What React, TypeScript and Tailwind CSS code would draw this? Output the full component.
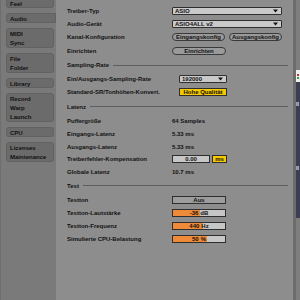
import React from "react";

const font = { fontFamily: '"Liberation Sans", Arial, sans-serif' };

const tabs: { lines: string[]; h: string; active?: boolean }[] = [
  { lines: ["Feel"], h: "h-[10px]" },
  { lines: ["Audio"], h: "h-[10px]", active: true },
  { lines: ["MIDI", "Sync"], h: "h-[20px]" },
  { lines: ["File", "Folder"], h: "h-[20px]" },
  { lines: ["Library"], h: "h-[10px]" },
  { lines: ["Record", "Warp", "Launch"], h: "h-[29px]" },
  { lines: ["CPU"], h: "h-[10px]" },
  { lines: ["Licenses", "Maintenance"], h: "h-[20px]" },
];

const Arrow = () => (
  <svg width="5" height="4" viewBox="0 0 5 4" className="shrink-0">
    <path d="M0 0.5 H5 L2.5 3.5 Z" fill="#111" />
  </svg>
);

const Dropdown = ({ text, w }: { text: string; w: string }) => (
  <div className={`${w} h-[8px] flex items-center justify-between pl-[2px] pr-[3px] bg-[#c9c9c9] border border-[#2e2e2e] rounded-[1px] text-[6px] font-bold text-[#111] leading-none`}>
    <span>{text}</span>
    <Arrow />
  </div>
);

const Pill = ({ text, w }: { text: string; w: string }) => (
  <div className={`${w} h-[8px] flex items-center justify-center bg-[#9a9a9a] border border-[#3a3a3a] rounded-full text-[6px] font-bold text-[#111] leading-none`}>
    {text}
  </div>
);

const Field = ({ text, w, bg }: { text: string; w: string; bg: string }) => (
  <div className={`${w} h-[8px] flex items-center justify-center ${bg} border border-[#2e2e2e] text-[6px] font-bold text-[#111] leading-none`}>
    {text}
  </div>
);

const Slider = ({ value, unit, fill }: { value: string; unit: string; fill: number }) => (
  <div className="relative w-[54px] h-[8px] bg-[#c6c6c6] border border-[#2e2e2e] overflow-hidden">
    <div className="absolute left-0 top-0 bottom-0 bg-[#ee8a38]" style={{ width: fill }} />
    <div className="relative h-full flex items-center justify-center gap-[2px] text-[6px] font-bold text-[#111] leading-none">
      <span>{value}</span>
      <span>{unit}</span>
    </div>
  </div>
);

const Row = ({ label, h, lw = "w-[105px]", children }: { label: string; h: string; lw?: string; children?: React.ReactNode }) => (
  <div className={`${h} flex items-center`}>
    <div className={`${lw} shrink-0 text-[6px] font-bold text-[#121212] leading-none`}>{label}</div>
    {children}
  </div>
);

const Section = ({ title, h }: { title: string; h: string }) => (
  <div className={`${h} flex items-center gap-[4px] pr-[5px]`}>
    <span className="text-[6px] font-bold text-[#121212] leading-none">{title}</span>
    <div className="flex-1 h-px bg-[#5e5e5e]" />
  </div>
);

const Value = ({ text }: { text: string }) => (
  <span className="text-[6px] font-bold text-[#121212] leading-none">{text}</span>
);

export default function App() {
  return (
    <div className="w-[300px] h-[300px] flex bg-[#8d8d8d] overflow-hidden" style={font}>
      <div className="w-[56px] shrink-0 bg-[#7a7a7a] border-l border-[#6e6e6e] flex flex-col gap-[5px] pl-[5px] pr-[2px] mt-0">
        {tabs.map((t, i) => (
          <div
            key={i}
            className={`${t.h} ${i === 0 ? "-mt-[2px]" : ""} ${
              t.active ? "rounded-l-[3px] -mr-[2px] bg-[#6b6b6b]" : "rounded-[3px] bg-[#6b6b6b]"
            } border border-[#626262] pl-[3px] pt-[1px] flex flex-col text-[6px] font-bold text-[#111] leading-[9px]`}
          >
            {t.lines.map((l) => (
              <span key={l}>{l}</span>
            ))}
          </div>
        ))}
      </div>

      <div className="flex-1 pl-[11px] pt-[4px]">
        <Row label="Treiber-Typ" h="h-[13.3px]">
          <Dropdown text="ASIO" w="w-[110px]" />
        </Row>
        <Row label="Audio-Gerät" h="h-[13.3px]">
          <Dropdown text="ASIO4ALL v2" w="w-[110px]" />
        </Row>
        <Row label="Kanal-Konfiguration" h="h-[13.3px]">
          <div className="flex gap-[4px]">
            <Pill text="Eingangskonfig" w="w-[53px]" />
            <Pill text="Ausgangskonfig" w="w-[53px]" />
          </div>
        </Row>
        <Row label="Einrichten" h="h-[13.3px]">
          <Pill text="Einrichten" w="w-[54px]" />
        </Row>

        <Section title="Sampling-Rate" h="h-[16px]" />
        <Row label="Ein/Ausgangs-Sampling-Rate" h="h-[12.5px]" lw="w-[112px]">
          <Dropdown text="192000" w="w-[48px]" />
        </Row>
        <Row label="Standard-SR/Tonhöhen-Konvert." h="h-[12.5px]" lw="w-[112px]">
          <Field text="Hohe Qualität" w="w-[48px]" bg="bg-[#f6c800]" />
        </Row>

        <Section title="Latenz" h="h-[17px]" />
        <Row label="Puffergröße" h="h-[12.6px]">
          <Value text="64 Samples" />
        </Row>
        <Row label="Eingangs-Latenz" h="h-[12.6px]">
          <Value text="5.33 ms" />
        </Row>
        <Row label="Ausgangs-Latenz" h="h-[12.6px]">
          <Value text="5.33 ms" />
        </Row>
        <Row label="Treiberfehler-Kompensation" h="h-[12.6px]">
          <div className="flex gap-[2px]">
            <Field text="0.00" w="w-[38px]" bg="bg-[#c6c6c6]" />
            <Field text="ms" w="w-[15px]" bg="bg-[#f6c800]" />
          </div>
        </Row>
        <Row label="Globale Latenz" h="h-[12.6px]">
          <Value text="10.7 ms" />
        </Row>

        <Section title="Test" h="h-[15px]" />
        <Row label="Testton" h="h-[13px]">
          <Field text="Aus" w="w-[54px]" bg="bg-[#9c9c9c]" />
        </Row>
        <Row label="Testton-Lautstärke" h="h-[13px]">
          <Slider value="-36" unit="dB" fill={27} />
        </Row>
        <Row label="Testton-Frequenz" h="h-[13px]">
          <Slider value="440" unit="Hz" fill={30} />
        </Row>
        <Row label="Simulierte CPU-Belastung" h="h-[13px]">
          <Slider value="50" unit="%" fill={34} />
        </Row>
      </div>

      <div className="w-[7px] shrink-0 flex">
        <div className="w-[3px] bg-[#6c6c6c]" />
        <div className="flex-1 flex flex-col bg-[#7e7e7e]">
          <div className="h-[70px]" />
          <div className="h-[12px] bg-[#f0f0f0] flex flex-col justify-center gap-[1px] pl-px">
            <div className="w-[2px] h-[2px] bg-[#c03030]" />
            <div className="w-[2px] h-[2px] bg-[#30a040]" />
          </div>
          <div className="h-[136px] bg-[#3c3e52] flex flex-col pt-[20px] gap-[60px]">
            <div className="w-[3px] h-[4px] bg-[#9a9aa8]" />
            <div className="w-[3px] h-[4px] bg-[#9a9aa8]" />
          </div>
        </div>
      </div>
    </div>
  );
}
